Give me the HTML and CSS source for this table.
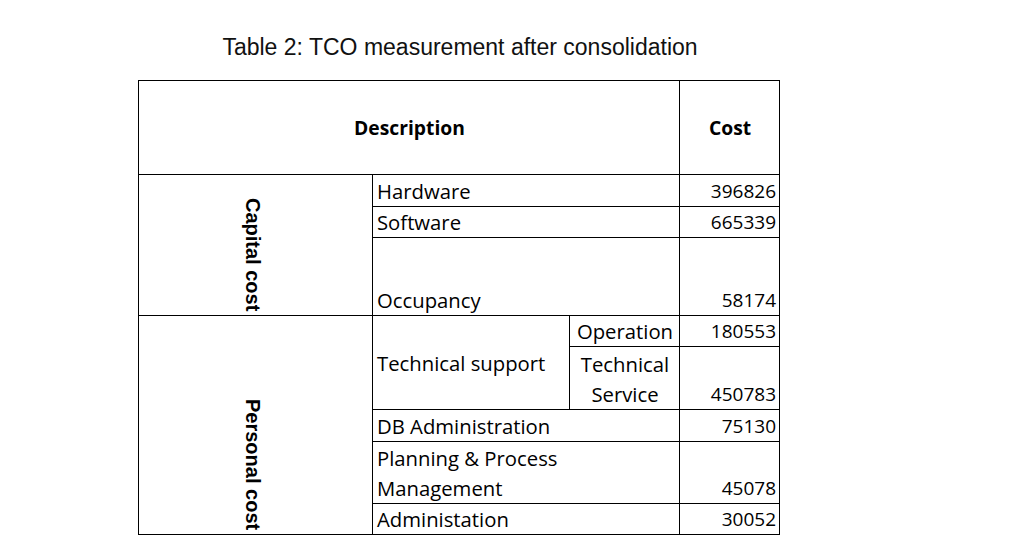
FILE: index.html
```html
<!DOCTYPE html>
<html>
<head>
<meta charset="utf-8">
<link rel="stylesheet" href="styles.css">
</head>
<body>
<div class="page">
  <p class="caption">Table 2: TCO measurement after consolidation</p>
  <table class="tco">
    <colgroup>
      <col class="c-cat"><col class="c-item"><col class="c-sub"><col class="c-cost">
    </colgroup>
    <tr class="r-head"><th colspan="3">Description</th><th>Cost</th></tr>
    <tr class="r-32"><td rowspan="3" class="cat"><span class="vert">Capital cost</span></td><td colspan="2" class="item">Hardware</td><td class="num">396826</td></tr>
    <tr class="r-31"><td colspan="2" class="item">Software</td><td class="num">665339</td></tr>
    <tr class="r-78"><td colspan="2" class="item">Occupancy</td><td class="num">58174</td></tr>
    <tr class="r-31"><td rowspan="5" class="cat"><span class="vert">Personal cost</span></td><td rowspan="2" class="item mid">Technical support</td><td class="sub">Operation</td><td class="num">180553</td></tr>
    <tr class="r-63"><td class="sub">Technical<br>Service</td><td class="num">450783</td></tr>
    <tr class="r-32"><td colspan="2" class="item">DB Administration</td><td class="num">75130</td></tr>
    <tr class="r-62"><td colspan="2" class="item">Planning &amp; Process<br>Management</td><td class="num">45078</td></tr>
    <tr class="r-30"><td colspan="2" class="item">Administation</td><td class="num">30052</td></tr>
  </table>
</div>
</body>
</html>
```

FILE: styles.css
```css
html, body {
  margin: 0;
  background: #ffffff;
}

.page {
  margin-left: 138px;
  width: 641px;
  padding-top: 34px;
}

.caption {
  margin: 0 0 20px 3px;
  font-family: "Liberation Sans", Arial, sans-serif;
  font-size: 23px;
  line-height: 26px;
  color: #111;
  text-align: center;
}

.tco {
  border-collapse: collapse;
  table-layout: fixed;
  width: 641px;
  font-family: "Open Sans", "Noto Sans", sans-serif;
  font-size: 20.3px;
  color: #000;
}

.c-cat { width: 234px; }
.c-item { width: 197px; }
.c-sub { width: 110px; }
.c-cost { width: 100px; }

.tco th,
.tco td {
  border: 1px solid #000;
  padding: 0 3px 0 4px;
  line-height: 30px;
  vertical-align: bottom;
  text-align: left;
}

.tco th {
  font-weight: bold;
  font-size: 19.3px;
  text-align: center;
  vertical-align: middle;
}

.r-head { height: 94px; }
.r-32 { height: 32px; }
.r-31 { height: 31px; }
.r-30 { height: 30px; }
.r-78 { height: 78px; }
.r-63 { height: 63px; }
.r-62 { height: 62px; }

.tco td.cat {
  text-align: center;
  padding: 0 6px 4px 0;
}

.vert {
  display: inline-block;
  writing-mode: vertical-rl;
  font-family: "Liberation Sans", Arial, sans-serif;
  font-weight: bold;
  font-size: 20px;
  line-height: 22px;
  vertical-align: bottom;
}

.tco td.mid {
  vertical-align: middle;
}

.tco td.sub {
  text-align: center;
}

.tco td.num {
  font-size: 19px;
  text-align: right;
  padding-right: 3px;
}
```
